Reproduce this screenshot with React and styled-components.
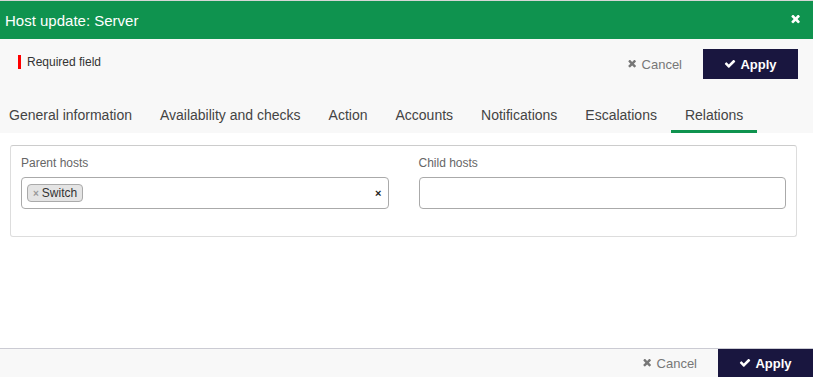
import React from "react";
import styled, { createGlobalStyle } from "styled-components";

const GlobalStyle = createGlobalStyle`
  html, body {
    margin: 0;
    padding: 0;
    background: #fff;
    font-family: "Liberation Sans", Arial, sans-serif;
  }
`;

const Modal = styled.div`
  display: flex;
  flex-direction: column;
  height: 377px;
  width: 813px;
  overflow: hidden;
`;

const Header = styled.div`
  align-items: center;
  background-color: #0f934f;
  border-top: 1px solid #d6d6d6;
  color: #fff;
  display: flex;
  flex-shrink: 0;
  height: 39px;
  justify-content: space-between;
  padding: 0 12px 0 5px;
  box-sizing: border-box;
`;

const Title = styled.h4`
  font-size: 15px;
  font-weight: normal;
  margin: 0;
`;

const CloseButton = styled.span`
  display: flex;
  cursor: pointer;
`;

const Toolbar = styled.div`
  align-items: flex-start;
  background-color: #f8f8f8;
  display: flex;
  flex-shrink: 0;
  height: 60px;
  justify-content: space-between;
  padding: 10px 15px 0 18px;
  box-sizing: border-box;
`;

const Required = styled.div`
  border-left: 3px solid #f00;
  color: #333;
  font-size: 12px;
  line-height: 14px;
  margin-top: 6px;
  padding-left: 6px;
`;

const Actions = styled.div`
  align-items: center;
  display: flex;
  gap: 21px;
`;

const CancelLink = styled.span`
  align-items: center;
  color: #777;
  cursor: pointer;
  display: flex;
  font-size: 13px;
  gap: 5px;
`;

const ApplyButton = styled.button`
  align-items: center;
  background-color: #19163f;
  border: none;
  color: #fff;
  cursor: pointer;
  display: flex;
  font-family: inherit;
  font-size: 13px;
  font-weight: bold;
  gap: 4px;
  height: ${(props) => props.height || 30}px;
  justify-content: center;
  padding: 0;
  width: 95px;
`;

const Tabs = styled.nav`
  background-color: #f8f8f8;
  display: flex;
  flex-shrink: 0;
  height: 34px;
`;

const Tab = styled.div`
  align-items: center;
  border-bottom: 3px solid ${(props) => (props.active ? "#0f934f" : "transparent")};
  color: #444;
  cursor: pointer;
  display: flex;
  font-size: 14px;
  padding: 0 14px;

  &:first-child {
    padding-left: 9px;
  }
`;

const Body = styled.div`
  background-color: #fff;
  flex: 1;
  padding: 12px 16px 0 10px;
`;

const Panel = styled.div`
  border: 1px solid #ddd;
  border-top-color: #ccc;
  border-radius: 3px;
  display: grid;
  gap: 30px;
  grid-template-columns: 1fr 1fr;
  padding: 10px 10px 27px;
`;

const Field = styled.div`
  display: flex;
  flex-direction: column;
`;

const Label = styled.label`
  color: #666;
  font-size: 12px;
  line-height: 15px;
  margin-bottom: 6px;
`;

const Select = styled.div`
  align-items: center;
  background: #fff;
  border: 1px solid #aaa;
  border-radius: 4px;
  box-sizing: border-box;
  display: flex;
  height: 32px;
  justify-content: space-between;
  padding: 0 6px 0 5px;
`;

const Tag = styled.span`
  align-items: center;
  background-color: #e4e4e4;
  border: 1px solid #aaa;
  border-radius: 4px;
  box-sizing: border-box;
  color: #333;
  display: flex;
  font-size: 12px;
  gap: 3px;
  height: 18px;
  padding: 0 5px;
`;

const TagRemove = styled.span`
  color: #999;
  font-size: 10px;
  font-weight: bold;
`;

const Clear = styled.span`
  color: #222;
  font-size: 11px;
  font-weight: bold;
`;

const Footer = styled.div`
  background-color: #f8f8f8;
  border-top: 1px solid #cbcbd3;
  display: flex;
  flex-shrink: 0;
  height: 29px;
  justify-content: flex-end;
  box-sizing: border-box;
`;

const TimesIcon = ({ size = 10, color = "currentColor" }) => (
  <svg width={size} height={size} viewBox="0 0 1408 1408" fill={color}>
    <path d="M1298 938q0 40-28 68l-136 136q-28 28-68 28t-68-28l-294-294-294 294q-28 28-68 28t-68-28l-136-136q-28-28-28-68t28-68l294-294-294-294q-28-28-28-68t28-68l136-136q28-28 68-28t68 28l294 294 294-294q28-28 68-28t68 28l136 136q28 28 28 68t-28 68l-294 294 294 294q28 28 28 68z" transform="translate(-55 0)" />
  </svg>
);

const CheckIcon = ({ size = 12 }) => (
  <svg width={size} height={size} viewBox="0 300 1792 1300" fill="currentColor">
    <path d="M1671 566q0 40-28 68l-724 724-136 136q-28 28-68 28t-68-28l-136-136-362-362q-28-28-28-68t28-68l136-136q28-28 68-28t68 28l294 295 656-657q28-28 68-28t68 28l136 136q28 28 28 68z" />
  </svg>
);

const tabs = [
  "General information",
  "Availability and checks",
  "Action",
  "Accounts",
  "Notifications",
  "Escalations",
  "Relations",
];

const App = () => {
  return (
    <Modal>
      <GlobalStyle />
      <Header>
        <Title>Host update: Server</Title>
        <CloseButton>
          <TimesIcon size={10} color="#fff" />
        </CloseButton>
      </Header>
      <Toolbar>
        <Required>Required field</Required>
        <Actions>
          <CancelLink>
            <TimesIcon size={9} />
            Cancel
          </CancelLink>
          <ApplyButton>
            <CheckIcon />
            Apply
          </ApplyButton>
        </Actions>
      </Toolbar>
      <Tabs>
        {tabs.map((t) => (
          <Tab key={t} active={t === "Relations"}>
            {t}
          </Tab>
        ))}
      </Tabs>
      <Body>
        <Panel>
          <Field>
            <Label>Parent hosts</Label>
            <Select>
              <Tag>
                <TagRemove>×</TagRemove>
                Switch
              </Tag>
              <Clear>×</Clear>
            </Select>
          </Field>
          <Field>
            <Label>Child hosts</Label>
            <Select />
          </Field>
        </Panel>
      </Body>
      <Footer>
        <Actions>
          <CancelLink>
            <TimesIcon size={9} />
            Cancel
          </CancelLink>
          <ApplyButton height={28}>
            <CheckIcon />
            Apply
          </ApplyButton>
        </Actions>
      </Footer>
    </Modal>
  );
};

export default App;
